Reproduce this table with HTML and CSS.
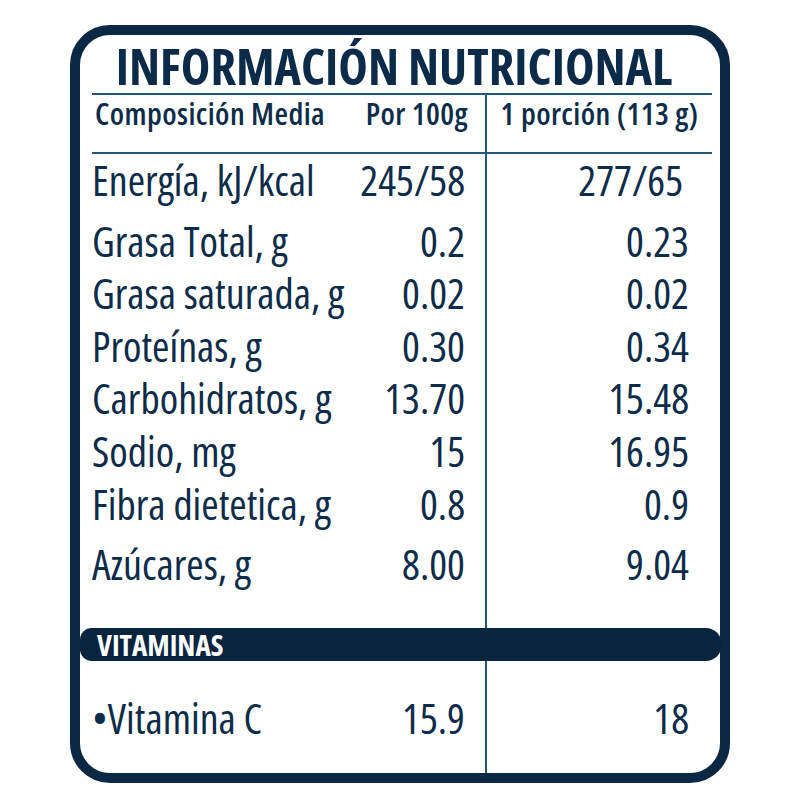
FILE: index.html
```html
<!DOCTYPE html>
<html lang="es">
<head>
<meta charset="utf-8">
<title>Información Nutricional</title>
<link rel="stylesheet" href="styles.css">
</head>
<body>
<section class="card">
  <h1 class="title">INFORMACIÓN NUTRICIONAL</h1>
  <div class="table">
    <div class="row head">
      <span class="l">Composición Media</span>
      <span class="v">Por 100g</span>
      <span class="w">1 porción (113 g)</span>
    </div>
    <div class="row energy">
      <span class="l">Energía, kJ/kcal</span>
      <span class="v">245/58</span>
      <span class="w w-energy">277/65</span>
    </div>
    <div class="row">
      <span class="l">Grasa Total, g</span>
      <span class="v">0.2</span>
      <span class="w">0.23</span>
    </div>
    <div class="row">
      <span class="l">Grasa saturada, g</span>
      <span class="v">0.02</span>
      <span class="w">0.02</span>
    </div>
    <div class="row">
      <span class="l">Proteínas, g</span>
      <span class="v">0.30</span>
      <span class="w">0.34</span>
    </div>
    <div class="row">
      <span class="l">Carbohidratos, g</span>
      <span class="v">13.70</span>
      <span class="w">15.48</span>
    </div>
    <div class="row">
      <span class="l">Sodio, mg</span>
      <span class="v">15</span>
      <span class="w">16.95</span>
    </div>
    <div class="row">
      <span class="l">Fibra dietetica, g</span>
      <span class="v">0.8</span>
      <span class="w">0.9</span>
    </div>
    <div class="row sugar">
      <span class="l">Azúcares, g</span>
      <span class="v">8.00</span>
      <span class="w">9.04</span>
    </div>
    <div class="section-bar">VITAMINAS</div>
    <div class="row vit">
      <span class="l">•Vitamina C</span>
      <span class="v">15.9</span>
      <span class="w">18</span>
    </div>
  </div>
</section>
</body>
</html>
```
FILE: styles.css
```css
html, body {
  margin: 0;
  padding: 0;
  background: #ffffff;
}

body {
  font-family: "Open Sans", "Liberation Sans", sans-serif;
  font-stretch: 75%;
  color: #0c2c4a;
}

.card {
  margin: 25px 0 0 70px;
  width: 660px;
  height: 758px;
  box-sizing: border-box;
  border: 10px solid #0a2844;
  border-radius: 40px;
  display: flex;
  flex-direction: column;
}

.title {
  margin: 0;
  padding: 4px 12px 0 0;
  height: 58px;
  box-sizing: border-box;
  font-size: 50px;
  line-height: 54px;
  font-weight: 700;
  text-align: center;
  color: #0b2b48;
  white-space: nowrap;
}

.table {
  flex: 1;
  margin: 0 8px 0 12px;
  border-top: 2px solid #245676;
  background: linear-gradient(#245676, #245676) 393px 0 / 2px 100% no-repeat;
  display: flex;
  flex-direction: column;
}

.row {
  display: grid;
  grid-template-columns: 1fr 125px 227px;
  font-size: 42px;
  line-height: 52.6px;
  white-space: nowrap;
}

.row .v {
  text-align: right;
  padding-right: 20px;
}

.row .w {
  text-align: right;
  padding-right: 23px;
}

.row .w-energy {
  padding-right: 29px;
}

.row.head {
  font-size: 31px;
  font-weight: 600;
  letter-spacing: 0.4px;
  line-height: 36px;
  padding: 0 0 21px 3px;
  border-bottom: 2px solid #245676;
  grid-template-columns: 1fr 122px 227px;
}

.row.head .v {
  padding-right: 17px;
}

.row.head .w {
  text-align: center;
  padding-right: 0;
  padding-left: 2px;
}

.row.energy {
  padding-bottom: 8px;
}

.row.sugar {
  padding: 8px 0 37px;
}

.section-bar {
  margin: 0 -10px 0 -12px;
  height: 33px;
  line-height: 34px;
  padding-left: 17px;
  background: #08243f;
  color: #ffffff;
  font-size: 29px;
  font-weight: 700;
  border-radius: 12px 17px 17px 12px;
}

.row.vit {
  padding-top: 31px;
}
```
